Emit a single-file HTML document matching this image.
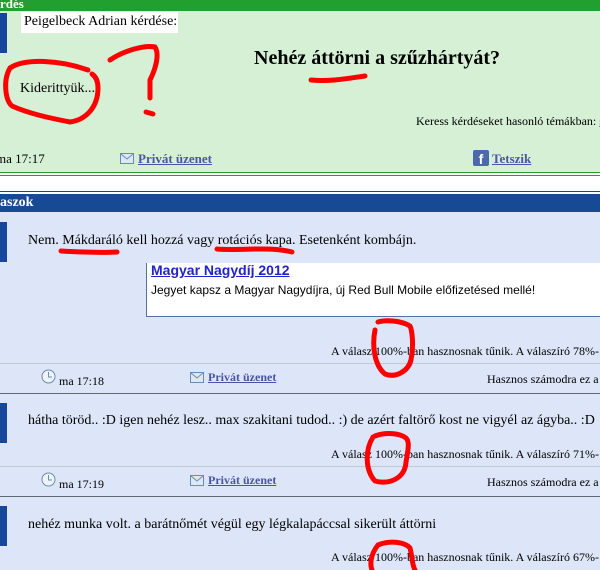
<!DOCTYPE html>
<html><head><meta charset="utf-8"><style>
*{margin:0;padding:0;box-sizing:border-box}
body{width:600px;height:570px;overflow:hidden;position:relative;background:#fff;font-family:"Liberation Serif",serif;font-size:13px;color:#000}
.a{position:absolute;white-space:nowrap}
.lk{color:#4a55a8;text-decoration:underline;font-weight:bold}
</style></head><body>
<div class="a" style="left:0;top:0;width:600px;height:11px;background:#22a02f"></div>
<div class="a" style="left:0;top:-4px;color:#fff;font-weight:bold;font-size:13px">rdés</div>
<div class="a" style="left:0;top:11px;width:600px;height:161px;background:#d5f0d5"></div>
<div class="a" style="left:0;top:172px;width:600px;height:1px;background:#22a02f"></div>
<div class="a" style="left:0;top:175px;width:600px;height:1px;background:#22a02f"></div>
<div class="a" style="left:0;top:13px;width:7px;height:40px;background:#17479a"></div>
<div class="a" style="left:21px;top:12px;width:157px;height:21px;background:#fff"></div>
<div class="a" style="left:24px;top:14px;font-size:14px">Peigelbeck Adrian kérdése:</div>
<div class="a" style="left:254px;top:47px;font-size:20px;font-weight:bold">Nehéz áttörni a szűzhártyát?</div>
<div class="a" style="left:20px;top:81px;font-size:14px">Kiderittyük...</div>
<div class="a" style="left:416px;top:114px;font-size:12px">Keress kérdéseket hasonló témákban: <span style="color:#4a55a8;text-decoration:underline">s</span></div>
<div class="a" style="left:-4px;top:151px;font-size:13px">ma 17:17</div>
<svg class="a" style="left:120px;top:153px" width="15" height="12"><rect x="0.5" y="0.5" width="13" height="10" fill="#dde8f0" stroke="#6a8cb0"/><path d="M1 1L7 6L13 1" fill="none" stroke="#6a8cb0"/></svg>
<div class="a lk" style="left:138px;top:151px">Privát üzenet</div>
<div class="a" style="left:473px;top:150px;width:16px;height:16px;background:#4b68a8;border-radius:2px;color:#fff;font:bold 14px 'Liberation Sans',sans-serif;text-align:center;line-height:18px">f</div>
<div class="a lk" style="left:492px;top:151px">Tetszik</div>

<div class="a" style="left:0;top:191px;width:600px;height:1px;background:#17479a"></div>
<div class="a" style="left:0;top:194px;width:600px;height:18px;background:#174a95"></div>
<div class="a" style="left:0;top:195px;color:#fff;font-weight:bold;font-size:14px">aszok</div>
<div class="a" style="left:0;top:212px;width:600px;height:358px;background:#dce6f8"></div>
<div class="a" style="left:0;top:222px;width:7px;height:40px;background:#17479a"></div>
<div class="a" style="left:28px;top:233px;font-size:14px">Nem. Mákdaráló kell hozzá vagy rotációs kapa. Esetenként kombájn.</div>
<div class="a" style="left:146px;top:263px;width:454px;height:54px;background:#fff;border-left:1px solid #5570a8;border-bottom:1px solid #5570a8"></div>
<div class="a" style="left:151px;top:262px;font:bold 14px 'Liberation Sans',sans-serif;color:#2222cc;text-decoration:underline">Magyar Nagydíj 2012</div>
<div class="a" style="left:151px;top:283px;font:12px 'Liberation Sans',sans-serif">Jegyet kapsz a Magyar Nagydíjra, új Red Bull Mobile előfizetésed mellé!</div>
<div class="a" style="left:331px;top:344px;font-size:12px">A válasz 100%-ban hasznosnak tűnik. A válaszíró 78%-</div>
<div class="a" style="left:0;top:363px;width:600px;height:1px;background:#c4c8d0"></div>
<svg class="a" style="left:41px;top:369px" width="15" height="15"><circle cx="7.5" cy="7.5" r="6.5" fill="#eef3fa" stroke="#6a8cb0"/><path d="M7.5 3V8H11" fill="none" stroke="#6a8cb0"/></svg>
<div class="a" style="left:59px;top:374px;font-size:12px">ma 17:18</div>
<svg class="a" style="left:190px;top:372px" width="15" height="12"><rect x="0.5" y="0.5" width="13" height="10" fill="#dde8f0" stroke="#6a8cb0"/><path d="M1 1L7 6L13 1" fill="none" stroke="#6a8cb0"/></svg>
<div class="a lk" style="left:208px;top:370px;font-size:12px">Privát üzenet</div>
<div class="a" style="left:487px;top:372px;font-size:12px">Hasznos számodra ez a</div>
<div class="a" style="left:0;top:393px;width:600px;height:1px;background:#606870"></div>

<div class="a" style="left:0;top:403px;width:7px;height:40px;background:#17479a"></div>
<div class="a" style="left:28px;top:413px;font-size:14px">hátha töröd.. :D igen nehéz lesz.. max szakitani tudod.. :) de azért faltörő kost ne vigyél az ágyba.. :D</div>
<div class="a" style="left:331px;top:447px;font-size:12px">A válasz 100%-ban hasznosnak tűnik. A válaszíró 71%-</div>
<div class="a" style="left:0;top:466px;width:600px;height:1px;background:#c4c8d0"></div>
<svg class="a" style="left:41px;top:472px" width="15" height="15"><circle cx="7.5" cy="7.5" r="6.5" fill="#eef3fa" stroke="#6a8cb0"/><path d="M7.5 3V8H11" fill="none" stroke="#6a8cb0"/></svg>
<div class="a" style="left:59px;top:477px;font-size:12px">ma 17:19</div>
<svg class="a" style="left:190px;top:475px" width="15" height="12"><rect x="0.5" y="0.5" width="13" height="10" fill="#dde8f0" stroke="#6a8cb0"/><path d="M1 1L7 6L13 1" fill="none" stroke="#6a8cb0"/></svg>
<div class="a lk" style="left:208px;top:473px;font-size:12px">Privát üzenet</div>
<div class="a" style="left:487px;top:475px;font-size:12px">Hasznos számodra ez a</div>
<div class="a" style="left:0;top:496px;width:600px;height:1px;background:#606870"></div>

<div class="a" style="left:0;top:506px;width:7px;height:40px;background:#17479a"></div>
<div class="a" style="left:28px;top:517px;font-size:14px">nehéz munka volt. a barátnőmét végül egy légkalapáccsal sikerült áttörni</div>
<div class="a" style="left:331px;top:550px;font-size:12px">A válasz 100%-ban hasznosnak tűnik. A válaszíró 67%-</div>

<svg class="a" style="left:0;top:0" width="600" height="570" fill="none" stroke="#f00" stroke-width="5" stroke-linecap="round" stroke-linejoin="round">
<path d="M88 70C60 60 25 58 10 68C3 80 5 100 12 106C30 114 50 118 70 122C85 120 98 108 98 88C98 80 95 76 92 74"/>
<path d="M110 60C125 50 145 45 155 47C160 55 155 70 150 80L150 98"/>
<path d="M146 112L153 114"/>
<path d="M311 80C330 82 350 78 365 76"/>
<path d="M61 251C80 252 100 253 117 252"/>
<path d="M217 249C240 251 270 246 292 252"/>
<path d="M375 330C372 345 374 365 385 374C395 378 408 372 411 360C414 345 412 330 410 326C400 320 385 320 378 322"/>
<path d="M373 437C365 450 365 470 375 481C390 485 405 478 406 462C408 450 410 442 406 438C400 433 385 432 375 436"/>
<path d="M378 545C370 555 370 565 372 570"/>
<path d="M378 545C390 540 405 542 410 548C412 555 412 565 415 570"/>
</svg>
</body></html>
